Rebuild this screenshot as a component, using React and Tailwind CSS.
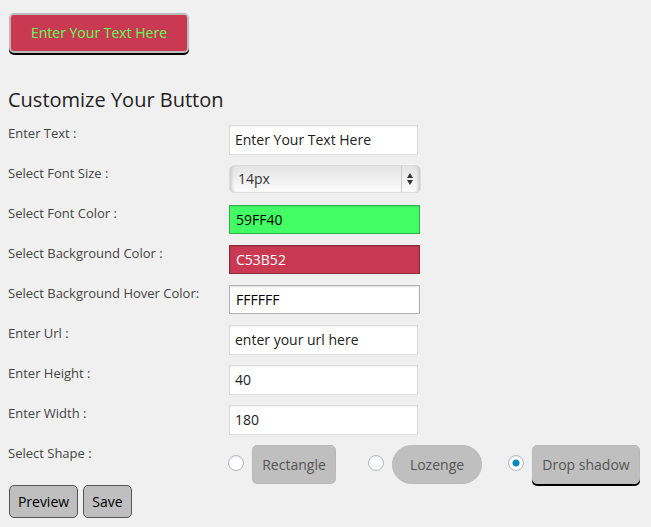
import { useState } from "react";

const plainInput =
  "h-[30px] w-[189px] border border-[#ddd] bg-white px-[5px] pb-0.5 text-sm text-[#222] shadow-[inset_0_1px_2px_rgba(0,0,0,0.07)] outline-none";

const colorInput =
  "h-[29px] w-[191px] border px-1.5 text-sm shadow-[inset_0_1px_2px_rgba(0,0,0,0.12)] outline-none";

function Row({ id, label, children }) {
  return (
    <div className="flex h-10 items-start">
      <label htmlFor={id} className="w-[221px] shrink-0 text-[13px] leading-4 text-[#444]">
        {label}
      </label>
      {children}
    </div>
  );
}

function Shape({ value, selected, onSelect, shapeClass, children }) {
  return (
    <label className="flex items-center gap-2">
      <input
        type="radio"
        name="shape"
        value={value}
        checked={selected === value}
        onChange={() => onSelect(value)}
        className="mb-1 size-4 shrink-0 appearance-none rounded-full border border-[#b4b9be] bg-white shadow-[inset_0_1px_2px_rgba(0,0,0,0.1)] checked:bg-[radial-gradient(circle,#0a8abb_0_3px,transparent_4px)]"
      />
      <span
        className={`flex h-[39px] items-center justify-center whitespace-nowrap border border-[#bbb] bg-[#bfbfbf] text-sm text-[#555] ${shapeClass}`}
      >
        {children}
      </span>
    </label>
  );
}

export default function App() {
  const [shape, setShape] = useState("shadow");
  const [text, setText] = useState("Enter Your Text Here");

  return (
    <main className="min-h-screen bg-[#f0f0f0] px-2 pt-[13px] pb-2 font-['Open_Sans','Noto_Sans',sans-serif]">
      <button
        type="button"
        className="ml-px block h-10 w-[180px] rounded-[5px] border-2 border-[#bbb] bg-[#c93a52] text-sm font-medium text-[#59ff59] shadow-[0_2px_0_#000]"
      >
        {text}
      </button>

      <form onSubmit={(event) => event.preventDefault()}>
        <h1 className="mt-[33px] mb-[11px] text-xl leading-7 text-[#222]">Customize Your Button</h1>

        <Row id="text" label="Enter Text :">
          <input
            id="text"
            type="text"
            value={text}
            onChange={(event) => setText(event.target.value)}
            className={plainInput}
          />
        </Row>
        <Row id="font-size" label="Select Font Size :">
          <div className="relative">
            <select
              id="font-size"
              defaultValue="14"
              className="h-7 w-48 appearance-none rounded-[5px] border border-[#ddd] bg-linear-to-b from-[#e4e4e4] to-[#fcfcfc] px-2 text-sm text-[#333] shadow-[inset_4px_0_3px_-2px_#ccc,inset_-4px_0_3px_-2px_#ccc] outline-none"
            >
              <option value="12">12px</option>
              <option value="14">14px</option>
              <option value="16">16px</option>
            </select>
            <span className="pointer-events-none absolute inset-y-px right-1 flex w-4 items-center justify-center border-l border-[#ccc]">
              <svg viewBox="0 0 6 12" className="h-3 w-1.5" fill="#333" aria-hidden="true">
                <path d="M3 0L6 5H0zM0 7H6L3 12z" />
              </svg>
            </span>
          </div>
        </Row>
        <Row id="font-color" label="Select Font Color :">
          <input
            id="font-color"
            type="text"
            defaultValue="59FF40"
            className={`${colorInput} border-[#2fb14a] bg-[#43ff65] text-black`}
          />
        </Row>
        <Row id="background" label="Select Background Color :">
          <input
            id="background"
            type="text"
            defaultValue="C53B52"
            className={`${colorInput} border-[#8d2a3b] bg-[#c93a52] font-medium text-white`}
          />
        </Row>
        <Row id="hover" label="Select Background Hover Color:">
          <input
            id="hover"
            type="text"
            defaultValue="FFFFFF"
            className={`${colorInput} border-[#b2b2b2] bg-white text-black`}
          />
        </Row>
        <Row id="url" label="Enter Url :">
          <input id="url" type="text" defaultValue="enter your url here" className={plainInput} />
        </Row>
        <Row id="height" label="Enter Height :">
          <input id="height" type="text" defaultValue="40" className={plainInput} />
        </Row>
        <Row id="width" label="Enter Width :">
          <input id="width" type="text" defaultValue="180" className={plainInput} />
        </Row>

        <div role="radiogroup" aria-labelledby="shape-label" className="flex h-10 items-start">
          <span id="shape-label" className="w-[220px] shrink-0 text-[13px] leading-4 text-[#444]">
            Select Shape :
          </span>
          <div className="flex gap-8">
            <Shape value="rectangle" selected={shape} onSelect={setShape} shapeClass="w-[84px] rounded-[5px]">
              Rectangle
            </Shape>
            <Shape value="lozenge" selected={shape} onSelect={setShape} shapeClass="w-[90px] rounded-full">
              Lozenge
            </Shape>
            <div className="-ml-1.5">
              <Shape
                value="shadow"
                selected={shape}
                onSelect={setShape}
                shapeClass="w-[108px] rounded-[5px] shadow-[0_2px_0_#000]"
              >
                Drop shadow
              </Shape>
            </div>
          </div>
        </div>

        <div className="ml-px flex gap-[5px]">
          <button
            type="submit"
            className="h-[33px] w-[69px] rounded-[5px] border border-[#555] bg-[#bfbfbf] text-sm text-black"
          >
            Preview
          </button>
          <button
            type="button"
            className="h-[33px] w-[49px] rounded-[5px] border border-[#555] bg-[#bfbfbf] text-sm text-black"
          >
            Save
          </button>
        </div>
      </form>
    </main>
  );
}
